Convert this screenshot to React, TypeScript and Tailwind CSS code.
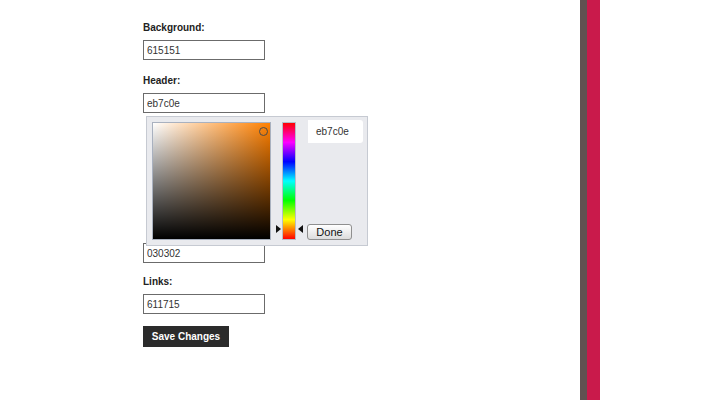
import React from "react";

type FieldProps = {
  label?: string;
  value: string;
  className?: string;
  children?: React.ReactNode;
};

const Field = ({ label, value, className = "", children }: FieldProps) => (
  <div className={`flex flex-col ${className}`}>
    {label && (
      <label className="mb-[6px] text-[10px] leading-[12px] font-bold text-[#222]">{label}</label>
    )}
    <input
      readOnly
      value={value}
      className="h-[20px] w-[122px] border border-[#6b6b6b] bg-white px-[3px] text-[10px] text-[#333] outline-none"
    />
    {children}
  </div>
);

/* --------------------- Color Picker --------------------- */
const ColorPicker = ({ hex }: { hex: string }) => (
  <div className="relative z-10 mb-[-3px] ml-[3px] mt-[3px] flex h-[130px] w-[222px] border border-[#c6cad2] bg-[#e9eaee] pl-[5px] pt-[5px]">
    {/* saturation / value square */}
    <div className="relative h-[118px] w-[119px] border border-[#a9b1bf] bg-[linear-gradient(to_top,#000,transparent),linear-gradient(to_right,#fff,#ff8000)]">
      <div className="absolute left-[106px] top-[4px] h-[9px] w-[9px] rounded-full border-[1.5px] border-[#4a4a4a]" />
    </div>

    {/* hue bar with arrows */}
    <div className="relative ml-[11px] h-[118px] w-[14px] border border-[#b7bdc8] bg-[linear-gradient(to_bottom,#f00,#f0f,#00f,#0ff,#0f0,#ff0,#f00)]">
      <svg className="absolute left-[-7px] top-[102px]" width="5" height="8" viewBox="0 0 5 8">
        <path d="M0 0L5 4L0 8Z" fill="#111" />
      </svg>
      <svg className="absolute right-[-8px] top-[102px]" width="5" height="8" viewBox="0 0 5 8">
        <path d="M5 0L0 4L5 8Z" fill="#111" />
      </svg>
    </div>

    {/* hex + done */}
    <div className="ml-[12px] flex h-[118px] flex-col justify-between">
      <div className="mt-[-2px] flex h-[23px] w-[55px] items-center rounded-r-[3px] bg-white pl-[8px] text-[10px] text-[#333]">
        {hex}
      </div>
      <button className="ml-[-1px] h-[16px] w-[45px] rounded-[3px] border border-[#8f8f8f] bg-[linear-gradient(to_bottom,#fff,#dcdcdc)] text-[11px] leading-[14px] text-[#111]">
        Done
      </button>
    </div>
  </div>
);

export default function App() {
  return (
    <div className="flex h-[400px] w-[720px] bg-white font-['Liberation_Sans',Arial,sans-serif]">
      <div className="w-[580px] pl-[143px] pt-[22px]">
        <form className="flex flex-col">
          <Field label="Background:" value="615151" />
          <Field label="Header:" value="eb7c0e" className="mt-[15px]">
            <ColorPicker hex="eb7c0e" />
          </Field>
          <Field value="030302" />
          <Field label="Links:" value="611715" className="mt-[13px]" />
          <button
            type="button"
            className="mt-[12px] h-[21px] w-[86px] bg-[#2b2b2b] text-[10px] font-bold text-white"
          >
            Save Changes
          </button>
        </form>
      </div>
      <div className="w-[7px] bg-[#615151]" />
      <div className="w-[13px] bg-[#c91a4b]" />
    </div>
  );
}
